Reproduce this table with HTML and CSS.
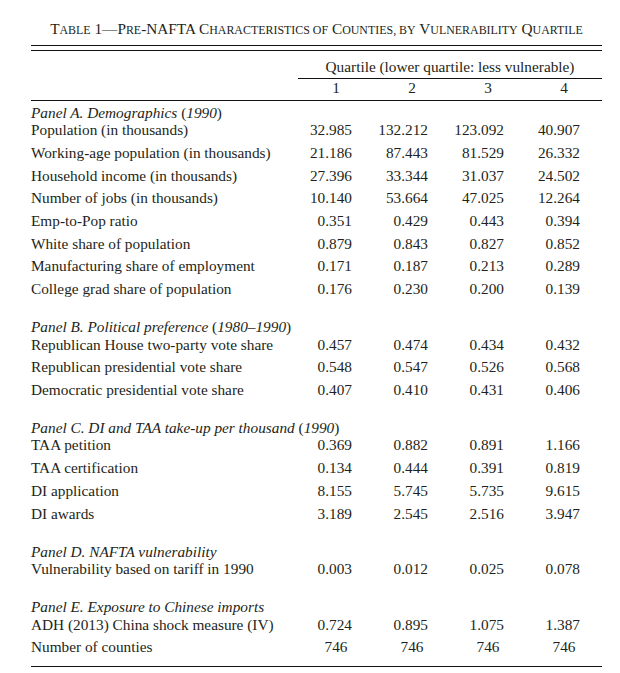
FILE: index.html
```html
<!DOCTYPE html>
<html lang="en">
<head>
<meta charset="utf-8">
<title>Table 1</title>
<link rel="stylesheet" href="styles.css">
</head>
<body>
<div class="page">
  <h1 class="title">T<span class="sc">able</span> 1—P<span class="sc">re</span>-NAFTA C<span class="sc">haracteristics of</span> C<span class="sc">ounties, by</span> V<span class="sc">ulnerability</span> Q<span class="sc">uartile</span></h1>
  <div class="double-rule"></div>

  <div class="head">
    <div class="spacer"></div>
    <div class="group-head">Quartile (lower quartile: less vulnerable)</div>
  </div>
  <div class="grid colnums">
    <div></div>
    <div class="ctr">1</div>
    <div class="ctr">2</div>
    <div class="ctr">3</div>
    <div class="ctr">4</div>
  </div>

  <div class="panels">
    <section class="panel">
      <div class="panel-title"><i>Panel A. Demographics </i>(<i>1990</i>)</div>
      <div class="grid row"><div>Population (in thousands)</div><div class="n">32.985</div><div class="n">132.212</div><div class="n">123.092</div><div class="n">40.907</div></div>
      <div class="grid row"><div>Working-age population (in thousands)</div><div class="n">21.186</div><div class="n">87.443</div><div class="n">81.529</div><div class="n">26.332</div></div>
      <div class="grid row"><div>Household income (in thousands)</div><div class="n">27.396</div><div class="n">33.344</div><div class="n">31.037</div><div class="n">24.502</div></div>
      <div class="grid row"><div>Number of jobs (in thousands)</div><div class="n">10.140</div><div class="n">53.664</div><div class="n">47.025</div><div class="n">12.264</div></div>
      <div class="grid row"><div>Emp-to-Pop ratio</div><div class="n">0.351</div><div class="n">0.429</div><div class="n">0.443</div><div class="n">0.394</div></div>
      <div class="grid row"><div>White share of population</div><div class="n">0.879</div><div class="n">0.843</div><div class="n">0.827</div><div class="n">0.852</div></div>
      <div class="grid row"><div>Manufacturing share of employment</div><div class="n">0.171</div><div class="n">0.187</div><div class="n">0.213</div><div class="n">0.289</div></div>
      <div class="grid row"><div>College grad share of population</div><div class="n">0.176</div><div class="n">0.230</div><div class="n">0.200</div><div class="n">0.139</div></div>
    </section>

    <section class="panel">
      <div class="panel-title"><i>Panel B. Political preference </i>(<i>1980–1990</i>)</div>
      <div class="grid row"><div>Republican House two-party vote share</div><div class="n">0.457</div><div class="n">0.474</div><div class="n">0.434</div><div class="n">0.432</div></div>
      <div class="grid row"><div>Republican presidential vote share</div><div class="n">0.548</div><div class="n">0.547</div><div class="n">0.526</div><div class="n">0.568</div></div>
      <div class="grid row"><div>Democratic presidential vote share</div><div class="n">0.407</div><div class="n">0.410</div><div class="n">0.431</div><div class="n">0.406</div></div>
    </section>

    <section class="panel">
      <div class="panel-title"><i>Panel C. DI and TAA take-up per thousand </i>(<i>1990</i>)</div>
      <div class="grid row"><div>TAA petition</div><div class="n">0.369</div><div class="n">0.882</div><div class="n">0.891</div><div class="n">1.166</div></div>
      <div class="grid row"><div>TAA certification</div><div class="n">0.134</div><div class="n">0.444</div><div class="n">0.391</div><div class="n">0.819</div></div>
      <div class="grid row"><div>DI application</div><div class="n">8.155</div><div class="n">5.745</div><div class="n">5.735</div><div class="n">9.615</div></div>
      <div class="grid row"><div>DI awards</div><div class="n">3.189</div><div class="n">2.545</div><div class="n">2.516</div><div class="n">3.947</div></div>
    </section>

    <section class="panel">
      <div class="panel-title"><i>Panel D. NAFTA vulnerability</i></div>
      <div class="grid row"><div>Vulnerability based on tariff in 1990</div><div class="n">0.003</div><div class="n">0.012</div><div class="n">0.025</div><div class="n">0.078</div></div>
    </section>

    <section class="panel">
      <div class="panel-title"><i>Panel E. Exposure to Chinese imports</i></div>
      <div class="grid row"><div>ADH (2013) China shock measure (IV)</div><div class="n">0.724</div><div class="n">0.895</div><div class="n">1.075</div><div class="n">1.387</div></div>
      <div class="grid row"><div>Number of counties</div><div class="ctr">746</div><div class="ctr">746</div><div class="ctr">746</div><div class="ctr">746</div></div>
    </section>
  </div>
  <div class="bottom-rule"></div>
</div>
</body>
</html>
```

FILE: styles.css
```css
html, body {
  margin: 0;
  padding: 0;
  background: #ffffff;
}

body {
  font-family: "Liberation Serif", "Times New Roman", serif;
  font-size: 15.3px;
  color: #231f20;
}

.page {
  width: 571px;
  margin-left: 31px;
  padding-top: 20px;
}

.title {
  margin: 0;
  font-size: 15.3px;
  font-weight: normal;
  line-height: 17.5px;
  text-align: center;
  height: 17.5px;
  white-space: nowrap;
}

.title .sc {
  text-transform: uppercase;
  font-size: 0.78em;
}

.double-rule {
  margin-top: 7.5px;
  height: 4px;
  border-top: 1px solid #111111;
  border-bottom: 1px solid #111111;
}

.head {
  display: grid;
  grid-template-columns: 267px 304px;
  margin-top: 7px;
}

.group-head {
  text-align: center;
  line-height: 17.5px;
  padding-bottom: 2.4px;
  border-bottom: 1px solid #111111;
}

.grid {
  display: grid;
  grid-template-columns: 267px repeat(4, 76px);
}

.colnums {
  line-height: 17.5px;
  padding-bottom: 3.4px;
  border-bottom: 1px solid #111111;
}

.ctr {
  text-align: center;
}

.n {
  text-align: right;
  padding-right: 22px;
}

.panels {
  padding-top: 3px;
}

.panel + .panel {
  margin-top: 20.5px;
}

.panel-title {
  line-height: 17.5px;
  white-space: nowrap;
}

.panel-title i {
  font-style: italic;
}

.row {
  line-height: 17.5px;
  padding-top: 5.2px;
  white-space: nowrap;
}

.panel-title + .row {
  padding-top: 0;
}

.bottom-rule {
  margin-top: 10.7px;
  border-top: 1px solid #111111;
}
```
